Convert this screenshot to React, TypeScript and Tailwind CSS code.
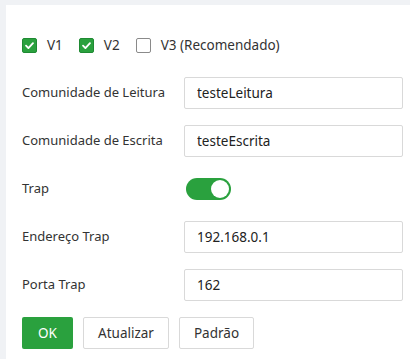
import { useState } from 'react';

function Check({ checked, label, onChange }: { checked: boolean; label: string; onChange: () => void }) {
  return (
    <label className="flex cursor-pointer items-center gap-[10px]" onClick={onChange}>
      <span
        className={
          checked
            ? 'flex h-[15px] w-[15px] items-center justify-center rounded-[2px] border border-[#1f8a33] bg-[#2aa13e]'
            : 'flex h-[15px] w-[15px] items-center justify-center rounded-[2px] border border-[#8a8a8a] bg-white'
        }
      >
        {checked && (
          <svg width="11" height="11" viewBox="0 0 12 12" fill="none">
            <path d="M2.2 6.2 L4.8 8.8 L9.8 3.4" stroke="white" strokeWidth="2" strokeLinecap="round" strokeLinejoin="round" />
          </svg>
        )}
      </span>
      <span>{label}</span>
    </label>
  );
}

function Row({ label, children }: { label: string; children: React.ReactNode }) {
  return (
    <div className="flex h-8 items-center">
      <div className="w-[162px] shrink-0">{label}</div>
      {children}
    </div>
  );
}

function TextField({ value }: { value: string }) {
  return (
    <input
      defaultValue={value}
      className="h-8 w-[219px] rounded-[2px] border border-[#d9d9d9] bg-white px-3 text-[13.5px] text-[#222] outline-none"
    />
  );
}

export default function App() {
  const [v, setV] = useState({ v1: true, v2: true, v3: false });
  const [trap, setTrap] = useState(true);

  return (
    <div
      className="min-h-[359px] bg-[#f0f2f5] pl-[6px] pt-[5px] text-[13px] text-[#333]"
      style={{ fontFamily: '"Noto Sans", "Segoe UI", sans-serif' }}
    >
      <div className="flex min-h-[354px] flex-col gap-4 bg-white pl-4 pt-6">
        <div className="flex h-8 items-center gap-4 text-[13.5px]">
          <Check checked={v.v1} label="V1" onChange={() => setV({ ...v, v1: !v.v1 })} />
          <Check checked={v.v2} label="V2" onChange={() => setV({ ...v, v2: !v.v2 })} />
          <Check checked={v.v3} label="V3 (Recomendado)" onChange={() => setV({ ...v, v3: !v.v3 })} />
        </div>
        <Row label="Comunidade de Leitura">
          <TextField value="testeLeitura" />
        </Row>
        <Row label="Comunidade de Escrita">
          <TextField value="testeEscrita" />
        </Row>
        <Row label="Trap">
          <button
            type="button"
            onClick={() => setTrap(!trap)}
            className={
              trap
                ? 'ml-[2px] flex h-[22px] w-[45px] items-center justify-end rounded-full bg-[#2aa13e] px-[2px]'
                : 'ml-[2px] flex h-[22px] w-[45px] items-center justify-start rounded-full bg-[#bfbfbf] px-[2px]'
            }
          >
            <span className="h-[18px] w-[18px] rounded-full bg-white" />
          </button>
        </Row>
        <Row label="Endereço Trap">
          <TextField value="192.168.0.1" />
        </Row>
        <Row label="Porta Trap">
          <TextField value="162" />
        </Row>
        <div className="flex h-8 items-center gap-[10px] text-[13.5px]">
          <button type="button" className="h-8 w-[51px] rounded-[2px] bg-[#2aa13e] text-white">
            OK
          </button>
          <button type="button" className="h-8 w-[86px] rounded-[2px] border border-[#d9d9d9] bg-white text-[#333]">
            Atualizar
          </button>
          <button type="button" className="h-8 w-[75px] rounded-[2px] border border-[#d9d9d9] bg-white text-[#333]">
            Padrão
          </button>
        </div>
      </div>
    </div>
  );
}
